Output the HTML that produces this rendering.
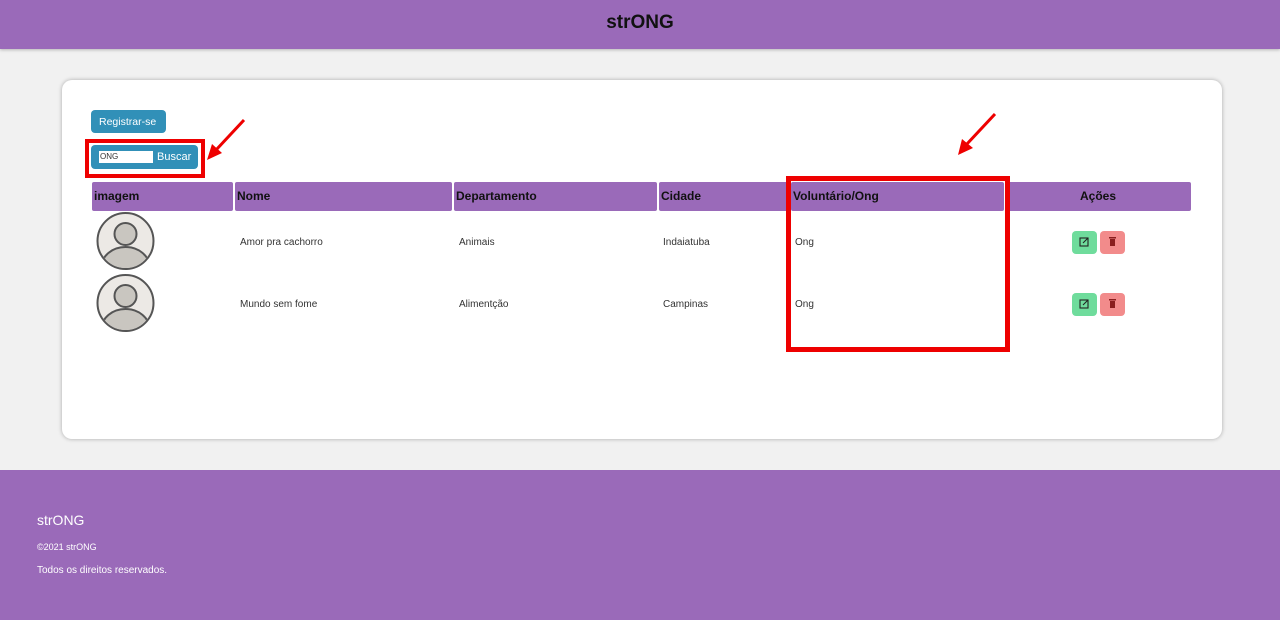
<!DOCTYPE html>
<html><head><meta charset="utf-8"><style>
*{margin:0;padding:0;box-sizing:border-box}
body{width:1280px;height:620px;background:#f1f1f1;font-family:"Liberation Sans",sans-serif;position:relative;overflow:hidden;color:#222}
.hdr{position:absolute;left:0;top:0;width:1280px;height:49px;background:#9a6ab9;box-shadow:0 1px 3px rgba(0,0,0,.25)}
.hdr span{position:absolute;left:0;right:0;top:12px;text-align:center;font-weight:bold;font-size:19px;color:#111}
.card{position:absolute;left:62px;top:80px;width:1160px;height:359px;background:#fff;border-radius:10px;box-shadow:0 0 4px rgba(0,0,0,.3)}
.abs{position:absolute}
.btn{background:#3190b8;color:#fff;border-radius:4px;font-size:11px}
.th{position:absolute;top:182px;height:29px;background:#9a6ab9;font-weight:bold;font-size:12px;color:#111;padding:7px 2px;border-radius:2px}
.td{position:absolute;font-size:10px;color:#333}
.av{position:absolute;left:96px;width:59px;height:58px}
.ft{position:absolute;left:0;top:470px;width:1280px;height:150px;background:#9a6ab9;color:#fff}
.red{position:absolute;border:4px solid #e00}
.ib{position:absolute;width:25px;height:23px;border-radius:4px}
</style></head><body>
<div class="hdr"><span>strONG</span></div>
<div class="card"></div>
<div class="abs btn" style="left:91px;top:110px;width:75px;height:23px;padding:6px 0 0 8px;font-size:10.5px">Registrar-se</div>
<div class="abs btn" style="left:91px;top:145px;width:107px;height:24px"></div>
<div class="abs" style="left:99px;top:151px;width:54px;height:12px;background:#fff;font-size:8px;padding:1px 1px;color:#333">ONG</div>
<div class="abs" style="left:157px;top:151px;font-size:11px;color:#fff">Buscar</div>
<div class="red" style="left:85px;top:139px;width:120px;height:39px"></div>

<div class="th" style="left:92px;width:141px">imagem</div>
<div class="th" style="left:235px;width:217px">Nome</div>
<div class="th" style="left:454px;width:203px">Departamento</div>
<div class="th" style="left:659px;width:130px">Cidade</div>
<div class="th" style="left:791px;width:213px">Voluntário/Ong</div>
<div class="th" style="left:1005px;width:186px;text-align:center">Ações</div>

<svg class="av" style="top:212px" viewBox="0 0 59 58"><circle cx="29.5" cy="29" r="28" fill="#ece9e5" stroke="#555" stroke-width="2"/><clipPath id="c1"><circle cx="29.5" cy="29" r="27"/></clipPath><g clip-path="url(#c1)"><circle cx="29.5" cy="22" r="11" fill="#c9c6c0" stroke="#555" stroke-width="2"/><ellipse cx="29.5" cy="55" rx="24" ry="20" fill="#c9c6c0" stroke="#555" stroke-width="2"/></g></svg>
<svg class="av" style="top:274px" viewBox="0 0 59 58"><circle cx="29.5" cy="29" r="28" fill="#ece9e5" stroke="#555" stroke-width="2"/><g clip-path="url(#c1)"><circle cx="29.5" cy="22" r="11" fill="#c9c6c0" stroke="#555" stroke-width="2"/><ellipse cx="29.5" cy="55" rx="24" ry="20" fill="#c9c6c0" stroke="#555" stroke-width="2"/></g></svg>

<div class="td" style="left:240px;top:237px">Amor pra cachorro</div>
<div class="td" style="left:459px;top:237px">Animais</div>
<div class="td" style="left:663px;top:237px">Indaiatuba</div>
<div class="td" style="left:795px;top:237px">Ong</div>
<div class="td" style="left:240px;top:299px">Mundo sem fome</div>
<div class="td" style="left:459px;top:299px">Alimentção</div>
<div class="td" style="left:663px;top:299px">Campinas</div>
<div class="td" style="left:795px;top:299px">Ong</div>

<div class="ib" style="left:1072px;top:231px;background:#6fdc9c"></div>
<div class="ib" style="left:1100px;top:231px;background:#f28b8b"></div>
<div class="ib" style="left:1072px;top:293px;background:#6fdc9c"></div>
<div class="ib" style="left:1100px;top:293px;background:#f28b8b"></div>
<svg class="abs" style="left:0;top:0" width="1280" height="620">
<g fill="none" stroke="#222" stroke-width="1.1">
<rect x="1080" y="238" width="8" height="8"/><path d="M1083 243l5-5"/>
<rect x="1080" y="300" width="8" height="8"/><path d="M1083 305l5-5"/>
</g>
<g fill="#8a1e1e"><rect x="1109" y="237" width="7" height="1.5"/><rect x="1110" y="239" width="5" height="7"/><rect x="1109" y="299" width="7" height="1.5"/><rect x="1110" y="301" width="5" height="7"/></g>
<g stroke="#e00" stroke-width="3" fill="none"><path d="M244 120L216 150"/><path d="M995 114L966 145"/></g>
<path d="M207 160L212 144L222 153Z" fill="#e00"/>
<path d="M958 155L962 139L973 148Z" fill="#e00"/>
</svg>
<div class="red" style="left:786px;top:176px;width:224px;height:176px;border-width:5px"></div>

<div class="ft">
<div class="abs" style="left:37px;top:42px;font-size:14px">strONG</div>
<div class="abs" style="left:37px;top:72px;font-size:9px">©2021 strONG</div>
<div class="abs" style="left:37px;top:95px;font-size:10px">Todos os direitos reservados.</div>
</div>
</body></html>
